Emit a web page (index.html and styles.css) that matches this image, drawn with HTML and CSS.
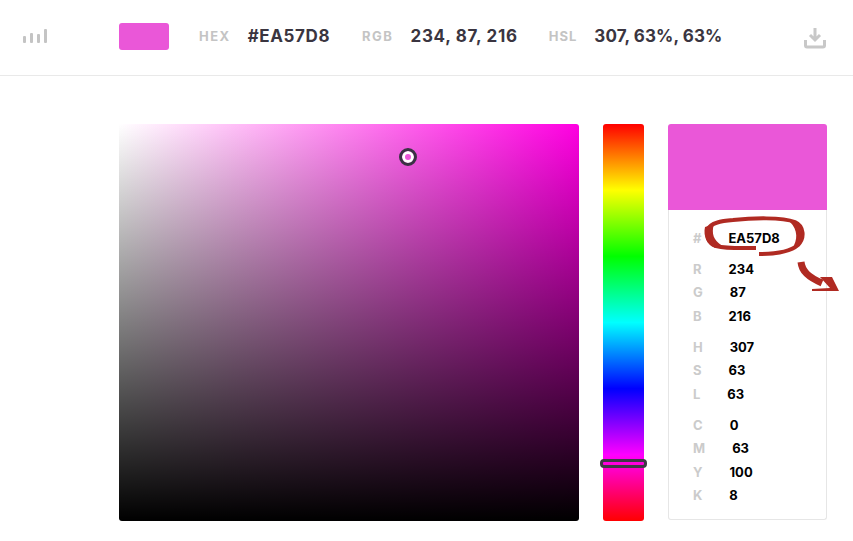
FILE: index.html
```html
<!DOCTYPE html>
<html lang="en">
<head>
<meta charset="utf-8">
<title>Color picker</title>
<link rel="stylesheet" href="styles.css">
</head>
<body>
<header class="topbar">
  <svg class="bars" width="24" height="14" viewBox="0 0 24 14"><g fill="#c4c4c4"><rect x="0" y="7" width="3" height="7" rx="1"/><rect x="7" y="4" width="3" height="10" rx="1"/><rect x="14" y="5" width="3" height="9" rx="1"/><rect x="21" y="0" width="3" height="14" rx="1"/></g></svg>
  <div class="swatch"></div>
  <span class="tag tag-hex">HEX</span><span class="val val-hex">#EA57D8</span>
  <span class="tag tag-rgb">RGB</span><span class="val val-rgb">234, 87, 216</span>
  <span class="tag tag-hsl">HSL</span><span class="val val-hsl">307, 63%, 63%</span>
  <svg class="download" width="22" height="21" viewBox="0 0 22 21"><path d="M11 0v11M6 7l5 5 5-5" fill="none" stroke="#c8c8c8" stroke-width="3"/><path d="M1.500 12v5.500a1.500 1.500 0 0 0 1.500 1.500h16a1.500 1.500 0 0 0 1.500-1.500V12" fill="none" stroke="#c8c8c8" stroke-width="3"/></svg>
</header>
<main class="stage">
  <div class="field"><span class="marker"></span></div>
  <div class="hue"><span class="hue-handle"></span></div>
  <aside class="panel">
    <div class="preview"></div>
    <div class="rows">
      <div class="group"><p class="row"><b>#</b><span>EA57D8</span></p></div>
      <div class="group">
        <p class="row"><b>R</b><span>234</span></p>
        <p class="row"><b>G</b><span>87</span></p>
        <p class="row"><b>B</b><span>216</span></p>
      </div>
      <div class="group">
        <p class="row"><b>H</b><span>307</span></p>
        <p class="row"><b>S</b><span>63</span></p>
        <p class="row"><b>L</b><span>63</span></p>
      </div>
      <div class="group">
        <p class="row"><b>C</b><span>0</span></p>
        <p class="row"><b>M</b><span>63</span></p>
        <p class="row"><b>Y</b><span>100</span></p>
        <p class="row"><b>K</b><span>8</span></p>
      </div>
    </div>
  </aside>
</main>
<svg class="scribble" width="853" height="541" viewBox="0 0 853 541">
  <path d="M759 254C772 254 790 252 798 245C805 238 804 226 795 222C782 217 752 218 733 220C720 221 711 223 708 229C706 237 709 243 716 246C728 249 745 248 756 248" fill="none" stroke="#b02a22" stroke-width="4"/>
  <path d="M705 227C703 236 707 245 715 248L721 245C714 240 711 234 714 224Z" fill="#b02a22"/>
  <path d="M794 220C802 226 804 238 798 245L792 249C798 240 798 230 790 222Z" fill="#b02a22"/>
  <path d="M801 262C802 271 808 277 822 283" fill="none" stroke="#b02a22" stroke-width="7"/>
  <path d="M820 277 832 277 839 291 812 291 812 289 830 288Z" fill="#b02a22"/>
</svg>
</body>
</html>
```
FILE: styles.css
```css
* { box-sizing: border-box; }
html, body { margin: 0; padding: 0; }
body {
  width: 853px;
  height: 541px;
  overflow: hidden;
  background: #fff;
  font-family: "Inter", "Liberation Sans", sans-serif;
  position: relative;
}
.topbar {
  height: 76px;
  border-bottom: 1px solid #e9e9e9;
  display: flex;
  align-items: center;
  padding: 0 27px 4px 23px;
}
.swatch {
  width: 50px;
  height: 27px;
  margin: 2px 0 0 72px;
  border-radius: 3px;
  background: #ea57d8;
}
.tag {
  font-size: 13px;
  font-weight: 700;
  letter-spacing: 1.500px;
  color: #c4c4c4;
}
.tag-hsl { letter-spacing: 1px; }
.val {
  font-size: 17px;
  font-weight: 700;
  letter-spacing: 0.600px;
  color: #3a3540;
}
.tag-hex { margin-left: 30px; }
.val-hex { margin-left: 17px; }
.tag-rgb { margin-left: 32px; }
.val-rgb { margin-left: 17px; letter-spacing: 0.700px; }
.tag-hsl { margin-left: 31px; }
.val-hsl { margin-left: 17px; letter-spacing: 0.100px; }
.download { margin-left: auto; margin-top: 6px; }
.stage {
  display: flex;
  align-items: flex-start;
  padding: 48px 0 0 119px;
}
.field {
  position: relative;
  width: 460px;
  height: 397px;
  border-radius: 3px;
  background:
    linear-gradient(to top, #000, rgba(0, 0, 0, 0)),
    linear-gradient(to right, #fff, hsl(307, 100%, 50%));
}
.marker {
  position: absolute;
  left: 280px;
  top: 24px;
  width: 18px;
  height: 18px;
  border-radius: 50%;
  border: 3px solid #3a3244;
  background: #ea57d8;
  box-shadow: inset 0 0 0 3px #fff;
}
.hue {
  position: relative;
  width: 41px;
  height: 397px;
  margin-left: 24px;
  border-radius: 3px;
  background: linear-gradient(#f00, #ff0, #0f0, #0ff, #00f, #f0f, #f00);
}
.hue-handle {
  position: absolute;
  left: -3px;
  top: 335px;
  width: 47px;
  height: 9px;
  border: 3px solid #3f3846;
  border-radius: 4px;
}
.panel {
  width: 159px;
  height: 396px;
  margin-left: 24px;
  display: flex;
  flex-direction: column;
}
.preview {
  height: 86px;
  border-radius: 3px 3px 0 0;
  background: #ea57d8;
}
.rows {
  flex: 1;
  display: flex;
  flex-direction: column;
  gap: 7.700px;
  padding: 17px 0 0 24px;
  border: 1px solid #e6e6e6;
  border-top: 0;
  border-radius: 0 0 3px 3px;
}
.row {
  margin: 0;
  height: 23.400px;
  line-height: 23.400px;
  font-size: 13px;
  font-weight: 700;
  color: #000;
  white-space: nowrap;
}
.row b {
  font-weight: 700;
  color: #cbcbcb;
  margin-right: 27px;
}
.scribble {
  position: absolute;
  left: 0;
  top: 0;
  pointer-events: none;
}
```
